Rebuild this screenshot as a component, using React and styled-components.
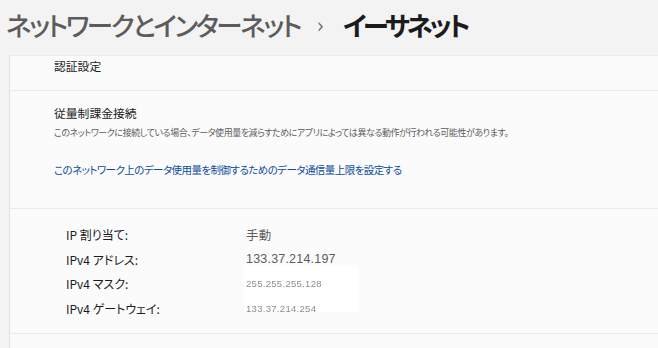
import React from 'react';
import styled, { createGlobalStyle } from 'styled-components';

const GlobalStyle = createGlobalStyle`
    html, body {
        margin: 0;
        padding: 0;
        background: #f3f3f3;
        overflow: hidden;
    }
    body {
        font-family: "Noto Sans CJK JP", "Noto Sans", sans-serif;
        font-feature-settings: "palt";
    }
`;

const Page = styled.div`
    width: 658px;
    height: 348px;
    display: flex;
    flex-direction: column;
    background: #f3f3f3;
    overflow: hidden;
`;

const Header = styled.h1`
    margin: 0;
    height: 55px;
    box-sizing: border-box;
    padding: 0 0 4px 6px;
    display: flex;
    align-items: center;
    font-size: 26.5px;
    line-height: 1;
    white-space: nowrap;
`;

const Crumb = styled.span`
    color: ${({ current }) => (current ? '#1b1b1b' : '#5c5c5c')};
    font-weight: ${({ current }) => (current ? 700 : 500)};
    letter-spacing: ${({ current }) => (current ? '-3.5px' : '-2.3px')};
`;

const Chevron = styled.span`
    margin: 0 18px 0 16px;
    color: #6b6b6b;
    font-size: 22px;
    font-weight: 400;
    font-family: "DejaVu Sans", sans-serif;
    transform: scaleX(0.8);
`;

const Panel = styled.div`
    flex: 1;
    margin-left: 9px;
    background: #fbfbfb;
    border-left: 1px solid #e3e3e3;
    border-top: 1px solid #ececec;
`;

// one section of the settings page, separated by a thin line
const Card = styled.section`
    height: ${({ h }) => h}px;
    box-sizing: border-box;
    padding: ${({ pad }) => pad || '0 0 0 44px'};
    border-bottom: 1px solid #ebebeb;
    color: #1b1b1b;
`;

const Title = styled.div`
    font-size: 11.8px;
    line-height: 20px;
    color: #1b1b1b;
`;

const Desc = styled.div`
    margin-top: 2px;
    font-size: 9px;
    line-height: 16px;
    letter-spacing: -0.45px;
    color: #5d5d5d;
    white-space: nowrap;
`;

const Link = styled.a`
    display: block;
    margin-top: 20px;
    font-size: 10.5px;
    line-height: 18px;
    letter-spacing: -0.55px;
    color: #0c4c9c;
    text-decoration: none;
    cursor: pointer;
`;

const PropGrid = styled.div`
    position: relative;
    display: grid;
    grid-template-columns: 180px auto;
    grid-auto-rows: 24.7px;
    align-items: center;
`;

const Label = styled.div`
    font-size: 12px;
    color: #1b1b1b;
    white-space: nowrap;
`;

const Value = styled.div`
    font-size: ${({ small }) => (small ? '9.5px' : '12.5px')};
    font-family: ${({ small }) => (small ? '"Liberation Sans", sans-serif' : '"Liberation Sans", "Noto Sans CJK JP", sans-serif')};
    color: ${({ small }) => (small ? '#8c8c8c' : '#5d5d5d')};
    letter-spacing: ${({ small }) => (small ? '0.3px' : '0.2px')};
    white-space: nowrap;
    filter: ${({ small }) => (small ? 'blur(0.35px)' : 'none')};
    position: relative;
    z-index: 1;
`;

const Patch = styled.div`
    position: absolute;
    left: 178px;
    top: 43px;
    width: 114px;
    height: 47px;
    background: #ffffff;
`;

const rows = [
    ['IP 割り当て:', '手動'],
    ['IPv4 アドレス:', '133.37.214.197'],
    ['IPv4 マスク:', '255.255.255.128', true],
    ['IPv4 ゲートウェイ:', '133.37.214.254', true],
];

export default function App() {
    return (
        <Page>
            <GlobalStyle />
            <Header>
                <Crumb>ネットワークとインターネット</Crumb>
                <Chevron>›</Chevron>
                <Crumb current>イーサネット</Crumb>
            </Header>
            <Panel>
                <Card h={35} pad="0 0 0 44px">
                    <Title>認証設定</Title>
                </Card>
                <Card h={118} pad="12px 0 0 44px">
                    <Title>従量制課金接続</Title>
                    <Desc>このネットワークに接続している場合、データ使用量を減らすためにアプリによっては異なる動作が行われる可能性があります。</Desc>
                    <Link>このネットワーク上のデータ使用量を制御するためのデータ通信量上限を設定する</Link>
                </Card>
                <Card h={125} pad="13px 0 0 56px">
                    <PropGrid>
                        <Patch />
                        {rows.map(([k, v, small]) => (
                            <React.Fragment key={k}>
                                <Label>{k}</Label>
                                <Value small={small}>{v}</Value>
                            </React.Fragment>
                        ))}
                    </PropGrid>
                </Card>
            </Panel>
        </Page>
    );
}
